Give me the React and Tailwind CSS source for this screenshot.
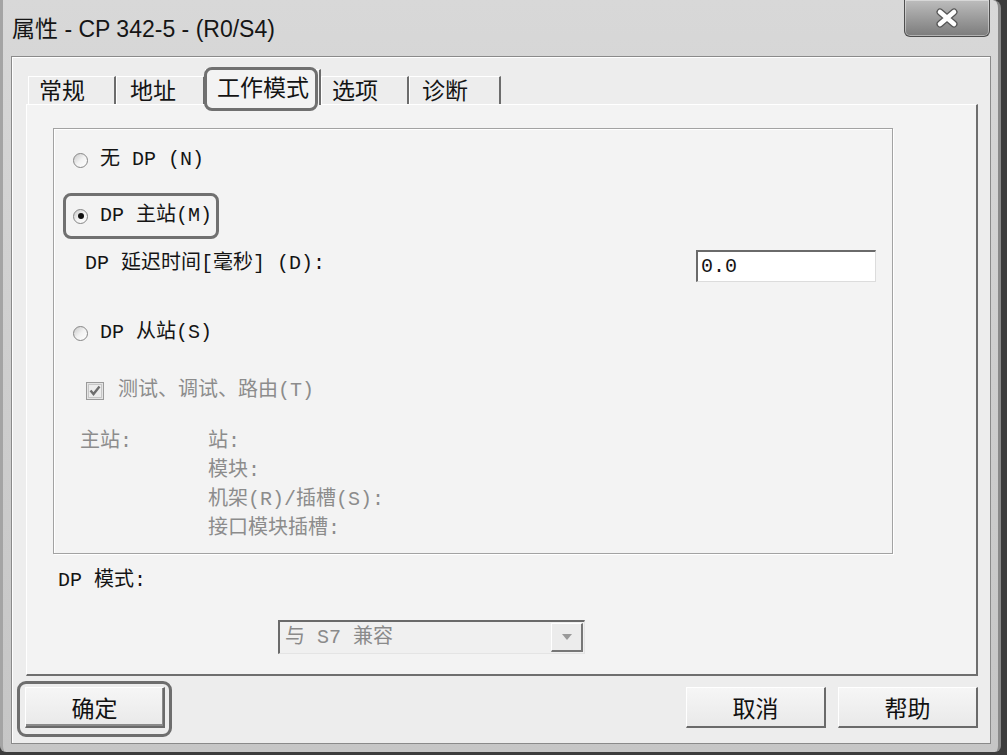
import React from "react";

const MONO = "font-['Liberation_Mono','Noto_Sans_CJK_SC',monospace]";
const SANS = "font-['Noto_Sans_CJK_SC',sans-serif]";

function Radio({ checked }) {
  return (
    <span className="w-[15px] h-[15px] rounded-full border border-[#868686] bg-gradient-to-br from-[#c8c8c8] via-[#f2f2f2] to-[#ffffff] flex items-center justify-center shrink-0">
      {checked && <span className="w-[6px] h-[6px] rounded-full bg-[#111]" />}
    </span>
  );
}

function Tab({ label, w, pl }) {
  return (
    <div
      className={`${w} ${pl} h-[28px] flex items-start border-l border-t border-l-white border-t-white border-r-2 border-r-[#6c6c6c] text-[23px] leading-[24px] text-[#141414] ${SANS}`}
    >
      {label}
    </div>
  );
}

function Btn({ children, def }) {
  return (
    <div className="relative">
      {def && (
        <div className="absolute -left-[8px] -top-[6px] -right-[7px] -bottom-[9px] rounded-[9px] border-[3px] border-[#6e6e6e]" />
      )}
      <div
        className={`w-[140px] h-[41px] flex items-center justify-center bg-gradient-to-b from-[#f6f6f6] to-[#e9e9e9] border-t border-l border-t-white border-l-white border-r-2 border-b-2 border-r-[#6a6a6a] border-b-[#6a6a6a] text-[23px] leading-none text-[#111] ${SANS} ${def ? "shadow-[inset_0_-2px_0_#8a8a8a,inset_-1px_0_0_#8a8a8a]" : ""}`}
      >
        {children}
      </div>
    </div>
  );
}

export default function App() {
  return (
    <div className="w-[1007px] h-[755px] bg-[#3c3c3c] overflow-hidden">
      <div className="w-[1001px] h-[752px] rounded-tr-[8px] rounded-bl-[6px] rounded-br-[6px] bg-gradient-to-b from-[#d8d8d8] via-[#cecece] to-[#c6c6c6] border-l-[3px] border-l-[#a4a4a4] border-r-[3px] border-r-[#8a8a8a] flex flex-col">
        {/* title bar */}
        <div className="h-[56px] flex items-start justify-between shrink-0">
          <div className="pl-[9px] pt-[16px] text-[23px] leading-[26px] text-[#151515] font-['Liberation_Sans','Noto_Sans_CJK_SC',sans-serif]">
            属性 - CP 342-5 - (R0/S4)
          </div>
          <div className="mr-[8px] w-[86px] h-[37px] rounded-b-[6px] border border-t-0 border-[#4e4e4e] bg-gradient-to-b from-[#bdbdbd] via-[#9c9c9c] to-[#7c7c7c] shadow-[inset_0_0_0_1px_rgba(255,255,255,0.4)] flex items-center justify-center">
            <svg width="24" height="20" viewBox="0 0 24 20">
              <path d="M5 4 L19 16 M19 4 L5 16" stroke="#555555" strokeWidth="7" strokeLinecap="round" />
              <path d="M5 4 L19 16 M19 4 L5 16" stroke="#ffffff" strokeWidth="4.6" strokeLinecap="round" />
            </svg>
          </div>
        </div>

        {/* client area */}
        <div className="ml-[8px] w-[980px] h-[688px] border border-[#8a8a8a] bg-[#ededed] flex flex-col shrink-0 shadow-[inset_1px_1px_0_#ffffff]">
          {/* tabs */}
          <div className="h-[47px] pl-[16px] flex items-end shrink-0">
            <Tab label="常规" w="w-[88px]" pl="pl-[10px]" />
            <Tab label="地址" w="w-[89px]" pl="pl-[13px]" />
            <div className="relative w-[116px] h-[36px] -mb-[1px] flex items-start pt-[3px] pl-[11px] bg-[#f3f3f3] border-l border-t border-l-white border-t-white border-r-2 border-r-[#6c6c6c] z-10">
              <div className="absolute -left-[2px] -top-[3px] right-[1px] -bottom-[6px] rounded-[8px] border-[3px] border-[#707070]" />
              <span className={`text-[23px] leading-[26px] text-[#141414] ${SANS}`}>工作模式</span>
            </div>
            <Tab label="选项" w="w-[88px]" pl="pl-[10px]" />
            <Tab label="诊断" w="w-[92px]" pl="pl-[12px]" />
          </div>

          {/* tab panel */}
          <div className="ml-[14px] w-[952px] h-[572px] bg-[#f3f3f3] border-t border-l border-t-white border-l-white border-r-2 border-b-2 border-r-[#6e6e6e] border-b-[#6e6e6e] flex flex-col shrink-0">
            {/* group box */}
            <div
              className={`ml-[26px] mt-[23px] w-[840px] h-[426px] border border-[#a2a2a2] shadow-[inset_1px_1px_0_#ffffff,1px_1px_0_#ffffff] flex flex-col shrink-0 text-[20px] ${MONO}`}
            >
              <div className="mt-[17px] h-[28px] pl-[19px] flex items-center gap-[12px] text-[#141414]">
                <Radio />
                <span>无 DP (N)</span>
              </div>

              <div className="mt-[28px] h-[28px] pl-[19px] flex">
                <div className="relative flex items-center gap-[12px] text-[#141414]">
                  <div className="absolute -left-[10px] -top-[9px] -right-[7px] -bottom-[9px] rounded-[8px] border-[3px] border-[#707070]" />
                  <Radio checked />
                  <span>DP 主站(M)</span>
                </div>
              </div>

              <div className="mt-[20px] h-[32px] pl-[31px] pr-[16px] flex items-center text-[#141414]">
                <span className="-mt-[4px]">DP 延迟时间[毫秒] (D):</span>
                <div className="ml-auto w-[180px] h-[32px] bg-white border-t-2 border-l-2 border-t-[#6a6a6a] border-l-[#6a6a6a] border-r border-b border-r-[#dcdcdc] border-b-[#dcdcdc] flex items-center pl-[3px]">
                  0.0
                </div>
              </div>

              <div className="mt-[37px] h-[28px] pl-[19px] flex items-center gap-[12px] text-[#141414]">
                <Radio />
                <span>DP 从站(S)</span>
              </div>

              <div className="mt-[30px] h-[28px] pl-[32px] flex items-center gap-[14px] text-[#8c8c8c]">
                <svg width="18" height="18" viewBox="0 0 18 18" className="shrink-0">
                  <rect x="0.5" y="0.5" width="17" height="17" fill="#e4e4e4" stroke="#9a9a9a" />
                  <rect x="2.5" y="2.5" width="13" height="13" fill="#ececec" stroke="#c6c6c6" />
                  <path d="M4.5 8.5 L7.5 12 L13.5 4.5" fill="none" stroke="#6e6e6e" strokeWidth="2.4" />
                </svg>
                <span>测试、调试、路由(T)</span>
              </div>

              <div className="mt-[22px] pl-[26px] flex text-[#8c8c8c] leading-[29px]">
                <div className="w-[128px]">主站:</div>
                <div className="flex flex-col">
                  <span>站:</span>
                  <span>模块:</span>
                  <span>机架(R)/插槽(S):</span>
                  <span>接口模块插槽:</span>
                </div>
              </div>
            </div>

            <div className={`mt-[13px] h-[28px] pl-[31px] flex items-center text-[20px] text-[#141414] ${MONO}`}>
              DP 模式:
            </div>

            <div className="mt-[25px] pl-[251px] flex">
              <div className="w-[307px] h-[34px] bg-[#f0f0f0] border-t-2 border-l-2 border-t-[#6a6a6a] border-l-[#6a6a6a] border-r border-b border-r-[#e4e4e4] border-b-[#e4e4e4] flex items-center">
                <span className={`pl-[5px] text-[20px] text-[#8a8a8a] ${MONO}`}>与 S7 兼容</span>
                <div className="ml-auto mr-[1px] w-[32px] h-[29px] bg-[#ececec] border-t border-l border-t-white border-l-white border-r-2 border-b-2 border-r-[#777777] border-b-[#777777] flex items-center justify-center">
                  <svg width="12" height="8" viewBox="0 0 12 8">
                    <path d="M1 1 H11 L6 7 Z" fill="#9a9a9a" />
                  </svg>
                </div>
              </div>
            </div>
          </div>

          {/* buttons */}
          <div className="mt-[11px] flex items-start">
            <div className="ml-[13px]">
              <Btn def>确定</Btn>
            </div>
            <div className="ml-auto">
              <Btn>取消</Btn>
            </div>
            <div className="ml-[12px] mr-[12px]">
              <Btn>帮助</Btn>
            </div>
          </div>
        </div>
      </div>
    </div>
  );
}
